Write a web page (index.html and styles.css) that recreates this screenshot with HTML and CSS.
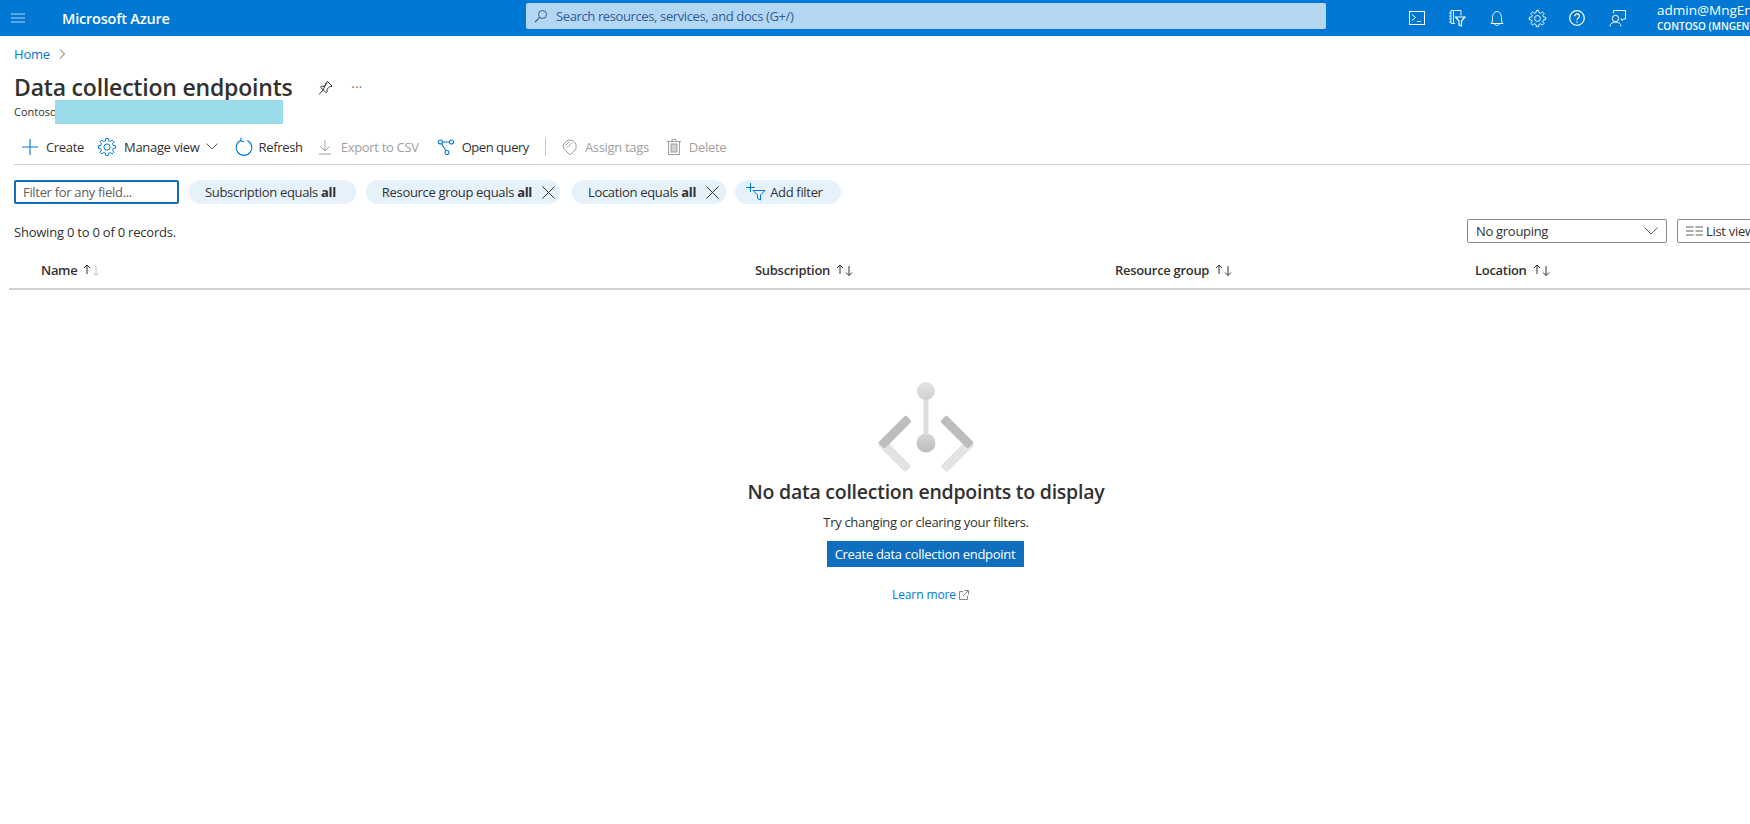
FILE: index.html
```html
<!DOCTYPE html>
<html lang="en">
<head>
    <meta charset="UTF-8">
    <title>Data collection endpoints - Microsoft Azure</title>
    <link rel="stylesheet" href="styles.css">
</head>
<body>
    <svg class="defs" width="0" height="0">
        <symbol id="gear" viewBox="-9 -9 18 18">
            <polygon fill="none" stroke="currentColor" stroke-width="0.9" stroke-linejoin="round" points="5.63,-1.4 7.72,-1.09 7.72,1.09 5.63,1.4 4.97,2.99 6.23,4.69 4.69,6.23 2.99,4.97 1.4,5.63 1.09,7.72 -1.09,7.72 -1.4,5.63 -2.99,4.97 -4.69,6.23 -6.23,4.69 -4.97,2.99 -5.63,1.4 -7.72,1.09 -7.72,-1.09 -5.63,-1.4 -4.97,-2.99 -6.23,-4.69 -4.69,-6.23 -2.99,-4.97 -1.4,-5.63 -1.09,-7.72 1.09,-7.72 1.4,-5.63 2.99,-4.97 4.69,-6.23 6.23,-4.69 4.97,-2.99"/>
            <circle r="2.8" fill="none" stroke="currentColor" stroke-width="0.9"/>
        </symbol>
        <symbol id="sort" viewBox="0 0 18 12">
            <path class="sort-up" d="M4 10V1M1 4l3-3 3 3" fill="none" stroke-width="1"/>
            <path class="sort-down" d="M13 2v9.500M10 8.500l3 3 3-3" fill="none" stroke-width="1"/>
        </symbol>
        <linearGradient id="ball" x1="0" y1="0" x2="0" y2="1">
            <stop offset="0" stop-color="#e4e4e4"/>
            <stop offset="1" stop-color="#d0d0d0"/>
        </linearGradient>
        <linearGradient id="ball2" x1="0" y1="0" x2="0" y2="1">
            <stop offset="0" stop-color="#d6d6d6"/>
            <stop offset="1" stop-color="#bcbcbc"/>
        </linearGradient>
    </svg>

    <header class="topbar">
        <div class="topbar-left">
            <svg class="hamburger" width="14" height="10" viewBox="0 0 14 10"><path d="M0 1h14M0 5h14M0 9h14" stroke="#a9d3f2" stroke-width="1.2"/></svg>
            <span class="brand">Microsoft Azure</span>
        </div>
        <div class="search">
            <svg width="14" height="14" viewBox="0 0 14 14"><circle cx="8.5" cy="5.5" r="4" fill="none" stroke="#2b5f96" stroke-width="1"/><path d="M5.6 8.4L1 13" stroke="#2b5f96" stroke-width="1.1"/></svg>
            <span>Search resources, services, and docs (G+/)</span>
        </div>
        <div class="topbar-right">
            <button class="top-icon"><svg width="16" height="14" viewBox="0 0 16 14"><rect x="0.5" y="0.5" width="15" height="13" fill="none" stroke="#fff"/><path d="M3 3.5L6.5 6.5 3 9.5M8 10.5h4" fill="none" stroke="#fff"/></svg></button>
            <button class="top-icon"><svg width="18" height="18" viewBox="0 0 18 18"><path d="M3 1.5h10v5M7 14.500H3v-13M5.500 1.500v13M1 4h2M1 7h2M1 10h2M1 13h2" fill="none" stroke="#fff" stroke-width="0.9"/><path d="M7.500 8h9.500l-3.500 4v5l-2.500-1.200V12z" fill="none" stroke="#fff" stroke-width="1.200"/></svg></button>
            <button class="top-icon"><svg width="14" height="17" viewBox="0 0 14 17"><path d="M1 13.500c1.500-1.500 1.500-3 1.500-6 0-3 2-6 4.500-6s4.500 3 4.500 6c0 3 0 4.500 1.500 6z" fill="none" stroke="#fff"/><path d="M5 14c0 2 4 2 4 0" fill="none" stroke="#fff"/></svg></button>
            <button class="top-icon"><svg class="gear-white" width="19" height="19"><use href="#gear"/></svg></button>
            <button class="top-icon"><svg width="16" height="16" viewBox="0 0 16 16"><circle cx="8" cy="8" r="7.300" fill="none" stroke="#fff" stroke-width="1.200"/><path d="M5.700 6.200c0-3 4.700-3 4.700 0 0 1.900-2.400 1.900-2.400 3.800" fill="none" stroke="#fff" stroke-width="1.200"/><circle cx="8" cy="12" r="0.800" fill="#fff"/></svg></button>
            <button class="top-icon"><svg width="17" height="17" viewBox="0 0 17 17"><path d="M4.500 3.500V0.500h12v8.500h-2l-1.500 1.500V9h-1.500" fill="none" stroke="#fff"/><circle cx="6.500" cy="8.500" r="3.200" fill="none" stroke="#fff"/><path d="M1 16.500c0-6 11-6 11 0" fill="none" stroke="#fff"/></svg></button>
            <div class="account">
                <div class="account-name">admin@MngEnv</div>
                <div class="account-org">CONTOSO (MNGENV)</div>
            </div>
        </div>
    </header>

    <main class="page">
        <nav class="breadcrumb">
            <a href="#">Home</a>
            <svg width="7" height="10" viewBox="0 0 7 10"><path d="M1 0.500L5.500 5 1 9.500" fill="none" stroke="#605e5c"/></svg>
        </nav>

        <div class="title-row">
            <h1>Data collection endpoints</h1>
            <svg class="pin" width="15" height="15" viewBox="0 0 15 15"><path d="M9 1l5 5-1 .8-1-.5-3 3 .2 2.500-1 1-3-3L1 14.500M5.200 9.800l-2.700-2.700 1-1 2.500.2 3-3-.5-1z" fill="none" stroke="#323130"/></svg>
            <span class="more">···</span>
        </div>
        <div class="subtitle">Contoso<span class="redacted"></span></div>

        <div class="toolbar">
            <button class="tool"><svg width="16" height="16" viewBox="0 0 16 16"><path d="M8 0v16M0 8h16" stroke="#0078d4" stroke-width="1.100"/></svg>Create</button>
            <button class="tool tool-gear"><svg class="gear-blue" width="20" height="20"><use href="#gear"/></svg>Manage view<svg class="caret" width="12" height="7" viewBox="0 0 12 7"><path d="M0.500 0.500L6 6l5.500-5.500" fill="none" stroke="#605e5c"/></svg></button>
            <button class="tool tool-refresh"><svg width="18" height="20" viewBox="0 0 16 18"><path d="M5 3.200A7 7 0 1 0 11 3.200M5.500 0.500L5 3.500l3 .8" fill="none" stroke="#0078d4" stroke-width="1"/></svg>Refresh</button>
            <button class="tool tool-off tool-export"><svg width="12" height="16" viewBox="0 0 12 16"><path d="M6 1v11M1.500 7.500L6 12l4.500-4.500M0 15h12" fill="none" stroke="#a19f9d"/></svg>Export to CSV</button>
            <button class="tool tool-query"><svg width="16" height="16" viewBox="0 0 16 16"><g fill="none" stroke="#0078d4" stroke-width="1.100"><circle cx="2.500" cy="3" r="2"/><circle cx="13.500" cy="3" r="2"/><circle cx="9" cy="13.500" r="2"/><path d="M4.500 3h7M3.500 4.800l4.500 7"/></g></svg>Open query</button>
            <span class="tool-divider"></span>
            <button class="tool tool-off"><svg width="15" height="16" viewBox="0 0 15 16"><path d="M1 6l5-5 5 .5L14 5v5l-6 6-6-6zM3.500 6.500l4-4M5 8.500l5-5" fill="none" stroke="#a19f9d"/></svg>Assign tags</button>
            <button class="tool tool-off tool-delete"><svg width="14" height="16" viewBox="0 0 14 16"><path d="M0 2.500h14M5 2.500V.5h4v2M1.500 2.500v13h11v-13" fill="none" stroke="#a19f9d"/><rect x="4" y="5" width="6" height="8" fill="#d2d0ce" stroke="#a19f9d"/></svg>Delete</button>
        </div>

        <div class="filters">
            <div class="filter-input">Filter for any field...</div>
            <span class="pill pill-plain"><span>Subscription equals <b>all</b></span></span>
            <span class="pill"><span>Resource group equals <b>all</b></span><svg width="13" height="13" viewBox="0 0 13 13"><path d="M0.500 0.500l12 12M12.500 0.500l-12 12" stroke="#323130"/></svg></span>
            <span class="pill pill-location"><span>Location equals <b>all</b></span><svg width="13" height="13" viewBox="0 0 13 13"><path d="M0.500 0.500l12 12M12.500 0.500l-12 12" stroke="#323130"/></svg></span>
            <span class="pill pill-add"><svg width="20" height="18" viewBox="0 0 20 18"><path d="M4.500 0v9M0 4.500h9" stroke="#0078d4"/><path d="M7 7.500h12l-4.500 4.500v5l-3-1.500V12z" fill="none" stroke="#0078d4"/></svg>Add filter</span>
        </div>

        <div class="records-row">
            <span class="records-count">Showing 0 to 0 of 0 records.</span>
            <div class="records-right">
                <div class="select">No grouping<svg width="14" height="8" viewBox="0 0 14 8"><path d="M0.500 0.500L7 7l6.500-6.500" fill="none" stroke="#605e5c"/></svg></div>
                <div class="view-button"><svg width="17" height="10" viewBox="0 0 17 10"><path d="M0 1h7.500M9.500 1h7.500M0 5h7.500M9.500 5h7.500M0 9h7.500M9.500 9h7.500" stroke="#605e5c"/></svg>List view</div>
            </div>
        </div>

        <div class="table-head">
            <div class="col">Name<svg class="sort-name" width="18" height="12"><use href="#sort"/></svg></div>
            <div class="col">Subscription<svg width="18" height="12"><use href="#sort"/></svg></div>
            <div class="col">Resource group<svg width="18" height="12"><use href="#sort"/></svg></div>
            <div class="col">Location<svg width="18" height="12"><use href="#sort"/></svg></div>
        </div>

        <section class="empty">
            <svg class="empty-icon" width="100" height="96" viewBox="0 0 100 96">
                <g fill="#e3e3e3">
                    <rect x="-19.500" y="-4.500" width="39" height="9" rx="2" transform="translate(18.500 73.500) rotate(45)"/>
                    <rect x="-19.500" y="-4.500" width="39" height="9" rx="2" transform="translate(81.500 73.500) rotate(-45)"/>
                </g>
                <g fill="#bdbdbd">
                    <rect x="-19.500" y="-4.500" width="39" height="9" rx="2" transform="translate(19 50) rotate(-45)"/>
                    <rect x="-19.500" y="-4.500" width="39" height="9" rx="2" transform="translate(81 50) rotate(45)"/>
                </g>
                <path d="M50 9v52" stroke="#dcdcdc" stroke-width="5"/>
                <circle cx="50" cy="9" r="9" fill="url(#ball)"/>
                <circle cx="50" cy="61" r="9.500" fill="url(#ball2)"/>
            </svg>
            <h2>No data collection endpoints to display</h2>
            <p>Try changing or clearing your filters.</p>
            <a class="primary" href="#">Create data collection endpoint</a>
            <a class="learn" href="#">Learn more<svg width="10" height="10" viewBox="0 0 10 10"><path d="M4 1.500H0.500v8h8V6M5.500 0.500h4v4M9.500 0.500L4 6" fill="none" stroke="#8a8886"/></svg></a>
        </section>
    </main>
</body>
</html>
```
FILE: styles.css
```css
* {
    box-sizing: border-box;
}

html, body {
    height: 100%;
}

body {
    margin: 0;
    overflow: hidden;
    font-family: "Open Sans", "Noto Sans", Arial, sans-serif;
    font-size: 13px;
    letter-spacing: -0.3px;
    color: #323130;
    background: #fff;
}

button {
    font: inherit;
    letter-spacing: inherit;
    color: inherit;
    background: none;
    border: none;
    padding: 0;
}

a {
    text-decoration: none;
    color: #0078d4;
}

.defs {
    position: absolute;
}

.sort-up {
    stroke: #323130;
}

.sort-down {
    stroke: var(--sort-down, #323130);
}

.sort-name {
    --sort-down: #c8c6c4;
}

/* top bar */
.topbar {
    display: grid;
    grid-template-columns: 526px 800px 1fr;
    align-items: center;
    height: 36px;
    background: #0078d4;
    color: #fff;
    width: 1750px;
}

.topbar-left {
    display: flex;
    align-items: center;
    padding-left: 11px;
}

.brand {
    margin-left: 37px;
    font-size: 14.5px;
    font-weight: 600;
    letter-spacing: -0.2px;
}

.search {
    display: flex;
    align-items: center;
    gap: 8px;
    height: 26px;
    margin-top: -4px;
    padding-left: 8px;
    background: #b3d6f2;
    border-radius: 2px;
    color: #2b5f96;
    letter-spacing: -0.38px;
}

.topbar-right {
    display: flex;
    align-items: center;
    padding-left: 71px;
    white-space: nowrap;
}

.top-icon {
    display: flex;
    align-items: center;
    justify-content: center;
    width: 40px;
    height: 36px;
}

.gear-white {
    color: #fff;
}

.account {
    margin-left: 20px;
    padding-bottom: 2px;
}

.account-name {
    font-size: 13.5px;
    line-height: 16px;
    letter-spacing: 0;
}

.account-org {
    margin-top: 2px;
    font-size: 10px;
    font-weight: 600;
    line-height: 12px;
    letter-spacing: 0;
}

/* page */
.page {
    width: 1843px;
    padding-left: 9px;
}

.breadcrumb {
    display: flex;
    align-items: center;
    gap: 9px;
    height: 18px;
    margin-top: 9px;
    padding-left: 5px;
    letter-spacing: -0.2px;
}

.title-row {
    display: flex;
    align-items: center;
    height: 32px;
    margin-top: 8px;
    padding-left: 5px;
}

h1 {
    margin: 0;
    font-size: 23px;
    font-weight: 600;
    letter-spacing: -0.2px;
}

.pin {
    margin-left: 25px;
}

.more {
    margin-left: 19px;
    font-size: 12px;
    letter-spacing: 0.5px;
    color: #605e5c;
}

.subtitle {
    display: flex;
    height: 24px;
    margin-top: -3px;
    padding-left: 5px;
    font-size: 11px;
    letter-spacing: 0;
    line-height: 24px;
    overflow: hidden;
}

.redacted {
    width: 228px;
    height: 24px;
    margin-left: -2px;
    background: #9bdbea;
}

.toolbar {
    display: flex;
    align-items: center;
    height: 41px;
    margin-left: 5px;
    padding-top: 5px;
    border-bottom: 1px solid #d2d0ce;
    letter-spacing: -0.32px;
}

.tool {
    display: flex;
    align-items: center;
    gap: 8px;
    height: 28px;
    padding: 0 8px;
    white-space: nowrap;
}

.tool-gear {
    gap: 7px;
    margin-left: -3px;
}

.caret {
    margin-left: -1px;
}

.tool-refresh {
    gap: 6px;
    margin-left: 1px;
}

.tool-export {
    gap: 10px;
}

.tool-query {
    margin-left: 3px;
    letter-spacing: -0.45px;
}

.tool-delete {
    margin-left: 2px;
}

.tool-off {
    color: #a19f9d;
}

.gear-blue {
    color: #0078d4;
}

.tool-divider {
    width: 1px;
    height: 18px;
    margin: 0 8px;
    background: #c8c6c4;
}

.filters {
    display: flex;
    align-items: center;
    gap: 10px;
    height: 24px;
    margin: 15px 0 0 5px;
    letter-spacing: -0.32px;
}

.filter-input {
    display: flex;
    align-items: center;
    width: 165px;
    height: 24px;
    padding-left: 7px;
    border: 2px solid #106ebe;
    border-radius: 2px;
    color: #605e5c;
}

.pill {
    display: flex;
    align-items: center;
    gap: 10px;
    height: 24px;
    padding: 0 5px 0 16px;
    background: #e5f1fb;
    border-radius: 12px;
    white-space: nowrap;
}

.pill b {
    font-weight: 700;
}

.pill-plain {
    padding-right: 20px;
}

.pill-location {
    margin-left: 2px;
    padding-right: 7px;
}

.pill-add {
    gap: 4px;
    margin-left: -1px;
    padding: 0 18px 0 11px;
}

.records-row {
    display: flex;
    align-items: center;
    justify-content: space-between;
    height: 24px;
    margin: 15px 0 0 5px;
}

.records-count {
    padding-top: 2px;
    letter-spacing: -0.22px;
}

.records-right {
    display: flex;
    gap: 10px;
    margin-right: 59px;
}

.select {
    display: flex;
    align-items: center;
    justify-content: space-between;
    width: 200px;
    height: 24px;
    padding: 0 8px;
    border: 1px solid #8a8886;
    border-radius: 2px;
}

.view-button {
    display: flex;
    align-items: center;
    gap: 3px;
    width: 107px;
    height: 24px;
    padding-left: 8px;
    border: 1px solid #8a8886;
    border-radius: 2px;
}

.table-head {
    display: grid;
    grid-template-columns: 714px 360px 360px 1fr;
    align-items: center;
    height: 37px;
    margin-top: 10px;
    padding: 0 0 2px 32px;
    border-bottom: 2px solid #d2d0ce;
    font-weight: 600;
}

.col {
    display: flex;
    align-items: center;
    gap: 6px;
}

/* empty state */
.empty {
    display: flex;
    flex-direction: column;
    align-items: center;
    padding-top: 92px;
}

.empty-icon {
    display: block;
}

h2 {
    margin: 2px 0 0;
    font-size: 19.5px;
    line-height: 24px;
    font-weight: 600;
    letter-spacing: -0.25px;
}

.empty p {
    margin: 9px 0 0;
}

.primary {
    display: flex;
    align-items: center;
    justify-content: center;
    width: 197px;
    height: 26px;
    margin: 10px 2px 0 0;
    background: #106ebe;
    color: #fff;
}

.learn {
    display: flex;
    align-items: center;
    gap: 3px;
    margin: 19px 0 0 9px;
    font-size: 12px;
    letter-spacing: -0.1px;
}
```
